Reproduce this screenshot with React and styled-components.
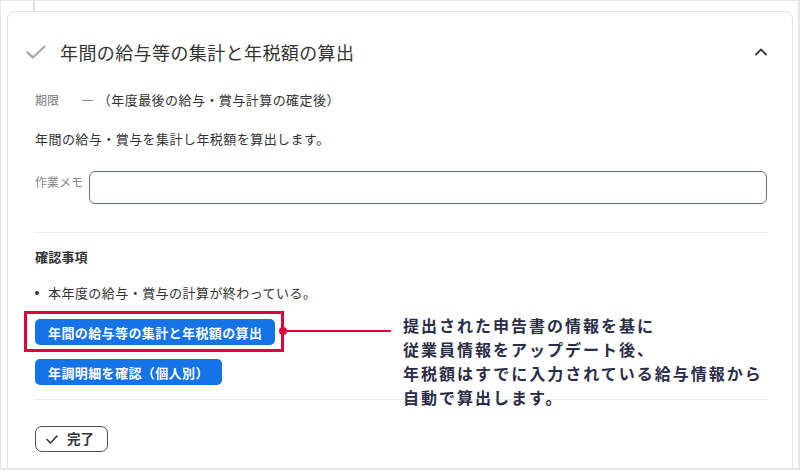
import React from "react";
import styled, { createGlobalStyle } from "styled-components";

const GlobalStyle = createGlobalStyle`
  html, body { margin: 0; padding: 0; background: #fff; }
  body {
    font-family: "Noto Sans CJK JP", "Noto Sans", sans-serif;
    color: #333;
  }
  * { box-sizing: border-box; }
`;

const Frame = styled.div`
  width: 800px;
  height: 470px;
  overflow: hidden;
  background: #fff;
  border-style: solid;
  border-color: #e6e6e6;
  border-width: 1px 2px 2px 1px;
  padding: 0 5px 0 6px;
`;

const Stem = styled.div`
  width: 2px;
  height: 10px;
  margin-left: 26px;
  background: #dfe2e6;
`;

const Card = styled.section`
  border: 1px solid #e3e3e3;
  border-radius: 8px;
  background: #fff;
  padding-bottom: 40px;
`;

const Header = styled.header`
  display: flex;
  align-items: center;
  padding: 28px 25px 26px 18px;
`;

const Title = styled.h2`
  margin: 0 0 0 14px;
  font-size: 18px;
  line-height: 24px;
  letter-spacing: 0.4px;
  font-weight: 400;
  color: #333;
`;

const Chevron = styled.svg`
  margin-left: auto;
  display: block;
`;

const Body = styled.div`
  padding: 0 25px 0 27px;
`;

const Row = styled.div`
  display: flex;
  align-items: ${(p) => (p.$top ? "flex-start" : "center")};
  margin-top: ${(p) => p.$mt || 0}px;
`;

const FieldLabel = styled.span`
  flex: none;
  width: ${(p) => p.$w}px;
  font-size: 12px;
  line-height: 20px;
  color: ${(p) => p.$color || "#777"};
  margin-top: ${(p) => p.$mt || 0}px;
`;

const Text = styled.p`
  margin: ${(p) => p.$mt || 0}px 0 0;
  font-size: 13px;
  line-height: 20px;
  letter-spacing: ${(p) => (p.$bold ? 0.2 : 0.45)}px;
  color: #333;
  font-weight: ${(p) => (p.$bold ? 700 : 400)};
`;

const Value = styled.span`
  font-size: 13px;
  line-height: 20px;
  letter-spacing: 0.45px;
  color: #333;
`;

const MemoInput = styled.div`
  flex: 1;
  height: 33px;
  border: 1px solid #646f7c;
  border-radius: 6px;
  background: #fff;
`;

const Divider = styled.hr`
  margin: ${(p) => p.$mt}px 0 0;
  border: none;
  border-top: 1px solid #ebebeb;
  height: 0;
`;

const BulletList = styled.ul`
  list-style: none;
  margin: 16px 0 0;
  padding: 0;
`;

const BulletItem = styled.li`
  display: flex;
  align-items: center;
  font-size: 13px;
  line-height: 20px;
  letter-spacing: 0.45px;
  color: #333;
  &::before {
    content: "";
    width: 4px;
    height: 4px;
    border-radius: 50%;
    background: #333;
    margin-right: 9px;
  }
`;

const ButtonSlot = styled.div`
  position: relative;
  display: flex;
  margin-top: ${(p) => p.$mt}px;
`;

const ActionButton = styled.button`
  display: inline-flex;
  align-items: center;
  height: 26px;
  padding: 0 13px;
  border: none;
  border-radius: 5px;
  background: #1473e6;
  color: #fff;
  font-family: inherit;
  font-size: 13px;
  letter-spacing: 0.4px;
  font-weight: 700;
  line-height: 1;
`;

const Highlight = styled.div`
  position: absolute;
  left: -11px;
  top: -8px;
  width: 260px;
  height: 41px;
  border: 3px solid #e2003b;
  pointer-events: none;
`;

const Dot = styled.span`
  position: absolute;
  right: -5.5px;
  top: 50%;
  width: 8px;
  height: 8px;
  margin-top: -4.5px;
  border-radius: 50%;
  background: #e2003b;
`;

const Leader = styled.span`
  position: absolute;
  left: 100%;
  top: 50%;
  width: 110px;
  height: 2px;
  margin-top: -1.5px;
  background: #e2003b;
`;

const Callout = styled.div`
  position: absolute;
  left: 368px;
  top: -6px;
  white-space: nowrap;
  font-size: 16px;
  line-height: 24px;
  letter-spacing: 2px;
  font-weight: 700;
  color: #2a2d47;
`;

const DoneButton = styled.button`
  display: inline-flex;
  align-items: center;
  gap: 9px;
  height: 26px;
  margin-top: 26px;
  padding: 0 13px 0 10px;
  border: 1px solid #4a4f57;
  border-radius: 7px;
  background: #fff;
  color: #333;
  font-family: inherit;
  font-size: 13.5px;
  font-weight: 700;
  line-height: 1;
`;

export default function App() {
  return (
    <>
      <GlobalStyle />
      <Frame>
        <Stem />
        <Card>
          <Header>
            <svg width="20" height="14" viewBox="0 0 20 14" fill="none">
              <path d="M1.5 7.5 L7 12.5 L18.5 1.5" stroke="#a9adb4" strokeWidth="2.4" strokeLinecap="round" strokeLinejoin="round" />
            </svg>
            <Title>年間の給与等の集計と年税額の算出</Title>
            <Chevron width="12" height="12" viewBox="0 0 12 12" fill="none">
              <path d="M1 8.5 L6 3.5 L11 8.5" stroke="#363b47" strokeWidth="1.8" strokeLinecap="round" strokeLinejoin="round" />
            </Chevron>
          </Header>
          <Body>
            <Row>
              <FieldLabel $w={46}>期限</FieldLabel>
              <Value>― （年度最後の給与・賞与計算の確定後）</Value>
            </Row>
            <Text $mt={19}>年間の給与・賞与を集計し年税額を算出します。</Text>
            <Row $top $mt={22}>
              <FieldLabel $w={54} $color="#888" $mt={1}>作業メモ</FieldLabel>
              <MemoInput />
            </Row>
            <Divider $mt={28} />
            <Text $mt={14} $bold>確認事項</Text>
            <BulletList>
              <BulletItem>本年度の給与・賞与の計算が終わっている。</BulletItem>
            </BulletList>
            <ButtonSlot $mt={16}>
              <ActionButton>年間の給与等の集計と年税額の算出</ActionButton>
              <Highlight>
                <Dot />
                <Leader />
              </Highlight>
              <Callout>
                提出された申告書の情報を基に
                <br />
                従業員情報をアップデート後、
                <br />
                年税額はすでに入力されている給与情報から
                <br />
                自動で算出します。
              </Callout>
            </ButtonSlot>
            <ButtonSlot $mt={14}>
              <ActionButton>年調明細を確認（個人別）</ActionButton>
            </ButtonSlot>
            <Divider $mt={14} />
            <DoneButton>
              <svg width="12" height="9" viewBox="0 0 12 9" fill="none">
                <path d="M1 4.5 L4.5 8 L11 1" stroke="#333" strokeWidth="1.6" strokeLinecap="round" strokeLinejoin="round" />
              </svg>
              完了
            </DoneButton>
          </Body>
        </Card>
      </Frame>
    </>
  );
}
